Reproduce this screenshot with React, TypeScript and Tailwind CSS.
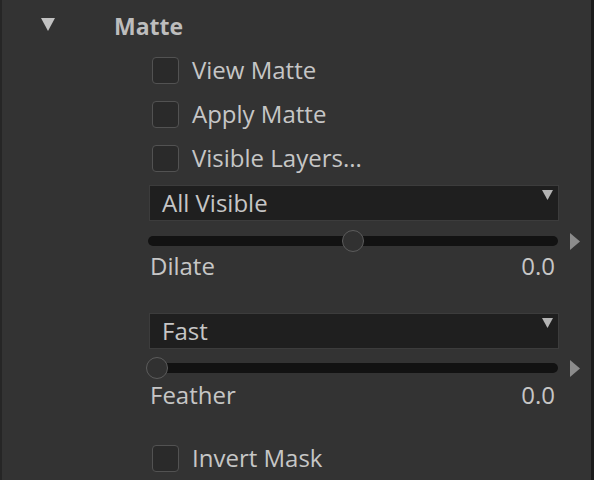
import React from "react";

const font = { fontFamily: '"Open Sans", "Noto Sans", sans-serif' };

function Checkbox({ label }: { label: string }) {
  return (
    <div className="flex h-[44px] items-center">
      <div className="ml-[4px] h-[27px] w-[27px] rounded-[4px] border-[1.5px] border-[#525252] bg-[#2a2a2a]" />
      <span className="ml-[13px] text-[24px] leading-[28px] text-[#c6c6c6]">{label}</span>
    </div>
  );
}

function Dropdown({ value }: { value: string }) {
  return (
    <div className="ml-[1px] flex h-[36px] w-[410px] border border-[#3c3c3c] bg-[#1f1f1f]">
      <span className="flex-1 self-center pl-[12px] text-[24px] leading-[28px] text-[#c6c6c6]">
        {value}
      </span>
      <svg className="mr-[5px] mt-[4px]" width="11" height="10" viewBox="0 0 11 10">
        <path d="M0 0 H11 L5.5 10 Z" fill="#b4b4b4" />
      </svg>
    </div>
  );
}

function Slider({ knob }: { knob: "mid" | "start" }) {
  return (
    <div className="flex h-[22px] items-center">
      <div className="relative h-[10px] w-[410px] rounded-full bg-[#121212]">
        <div
          className={
            knob === "mid"
              ? "absolute left-1/2 top-1/2 h-[22px] w-[22px] -translate-x-1/2 -translate-y-1/2 rounded-full border-[1.5px] border-[#5c5c5c] bg-[#313131]"
              : "absolute left-[-2px] top-1/2 h-[22px] w-[22px] -translate-y-1/2 rounded-full border-[1.5px] border-[#5c5c5c] bg-[#313131]"
          }
        />
      </div>
      <svg className="ml-[12px]" width="10" height="17" viewBox="0 0 10 17">
        <path d="M0 0 L10 8.5 L0 17 Z" fill="#8c8c8c" />
      </svg>
    </div>
  );
}

function ValueRow({ label, h }: { label: string; h: string }) {
  return (
    <div className={`flex w-[410px] items-center justify-between pl-[2px] pr-[3px] ${h}`}>
      <span className="text-[24px] leading-[28px] text-[#c6c6c6]">{label}</span>
      <span className="text-[24px] leading-[28px] text-[#c6c6c6]">0.0</span>
    </div>
  );
}

export default function App() {
  return (
    <div
      className="flex h-[480px] w-[594px] overflow-hidden border-l-2 border-r-[3px] border-l-[#262626] border-r-[#1b1b1b] bg-[#333333]"
      style={font}
    >
      <div className="flex w-full flex-col pt-[4px]">
        {/* HEADER */}
        <div className="flex h-[44px] items-center">
          <svg className="ml-[39px] mt-[-3px]" width="14" height="13" viewBox="0 0 14 13">
            <path d="M0 0 H14 L7 13 Z" fill="#c2c2c2" />
          </svg>
          <span className="ml-[59px] text-[23px] font-bold leading-[28px] text-[#bdbdbd]">Matte</span>
        </div>

        {/* CONTROLS */}
        <div className="ml-[146px] flex flex-col">
          <Checkbox label="View Matte" />
          <Checkbox label="Apply Matte" />
          <Checkbox label="Visible Layers..." />

          <div className="mt-[5px]">
            <Dropdown value="All Visible" />
          </div>
          <div className="mt-[9px]">
            <Slider knob="mid" />
          </div>
          <ValueRow label="Dilate" h="h-[28px]" />

          <div className="mt-[33px]">
            <Dropdown value="Fast" />
          </div>
          <div className="mt-[8px]">
            <Slider knob="start" />
          </div>
          <ValueRow label="Feather" h="h-[32px]" />

          <div className="mt-[25px]">
            <Checkbox label="Invert Mask" />
          </div>
        </div>
      </div>
    </div>
  );
}
